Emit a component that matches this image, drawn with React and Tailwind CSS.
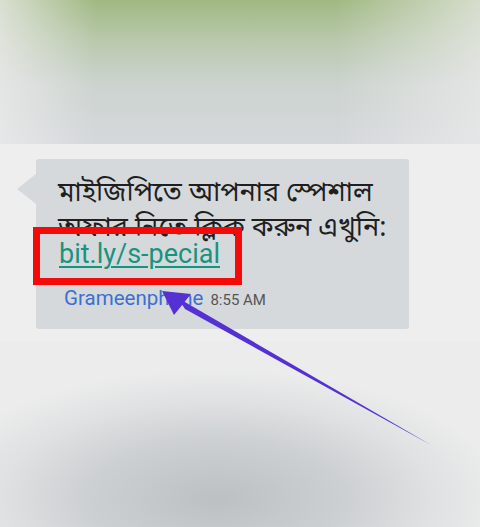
import React from "react";

const Arrow = () => (
  <svg
    className="absolute left-0 top-0 pointer-events-none"
    width="480"
    height="527"
    viewBox="0 0 480 527"
  >
    {/* shaft, tapering towards the tail */}
    <polygon points="178,298 185,309 431,445" fill="#5530d2" />
    {/* head */}
    <polygon points="162,291 191,294 174,315" fill="#5530d2" />
  </svg>
);

const App = () => {
  return (
    <div className="relative w-[480px] h-[527px] overflow-hidden flex flex-col font-['Roboto',sans-serif]">
      {/* wallpaper top */}
      <div className="relative h-[144px] bg-[linear-gradient(180deg,#a0b982_0%,#b9c8ac_28%,#ccd3cf_58%,#d5d8db_100%)]">
        <div className="absolute inset-0 bg-[linear-gradient(90deg,rgba(236,236,236,0.75)_0%,rgba(236,236,236,0)_20%,rgba(236,236,236,0)_70%,rgba(236,236,236,0.7)_100%)]" />
      </div>

      {/* message row */}
      <div className="h-[197px] bg-[#eeeeee] pt-[15px]">
        <div className="relative ml-[36px] w-[373px] h-[170px] rounded-[3px] bg-[#d6d9dc] pl-[22px] pt-[18px]">
          <div className="absolute left-[-19px] top-[15px] w-0 h-0 border-y-[15px] border-y-transparent border-r-[19px] border-r-[#d6d9dc]" />
          <p className="text-[27px] leading-[35px] text-[#1f1f1f] font-['Noto_Sans_Bengali','Noto_Sans',sans-serif]">
            মাইজিপিতে আপনার স্পেশাল অফার নিতে ক্লিক করুন এখুনি:
          </p>
          <div className="relative ml-[-25px] mt-[-20px] w-[209px] h-[58px] border-[7px] border-[#f50a0a] pl-[19px] pt-[2px]">
            <span className="text-[27px] leading-[36px] text-[#16947f] underline decoration-[2px] underline-offset-[3px]">
              bit.ly/s-pecial
            </span>
          </div>
          <div className="flex items-baseline gap-[7px] pl-[6px] mt-[-2px]">
            <span className="text-[20.5px] text-[#3d6fd1]">Grameenphone</span>
            <span className="text-[15px] text-[#555]">8:55 AM</span>
          </div>
        </div>
      </div>

      {/* wallpaper bottom */}
      <div className="flex-1 bg-[radial-gradient(ellipse_60%_70%_at_45%_85%,#bdc0c2_0%,#cdd0d2_45%,#dfe1e2_75%,#ececec_100%)]" />

      <Arrow />
    </div>
  );
};

export default App;
